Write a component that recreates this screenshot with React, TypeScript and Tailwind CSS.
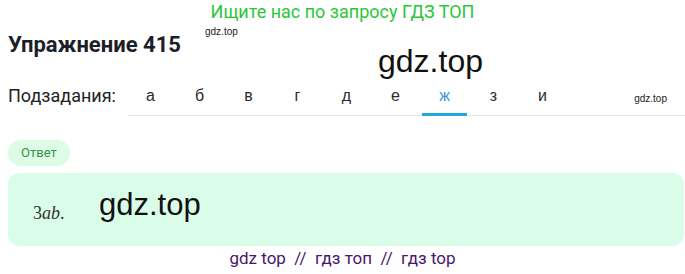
const tabs = ["а", "б", "в", "г", "д", "е", "ж", "з", "и"];
const active = "ж";

export default function App() {
  return (
    <div className="relative w-[685px] h-[274px] overflow-hidden bg-white font-['Roboto',sans-serif]">
      <p className="text-center text-[18px] leading-[24px] text-[#2bc63a]">
        Ищите нас по запросу ГДЗ ТОП
      </p>

      <h1 className="mt-[7px] ml-2 text-[22px] leading-[28px] font-bold text-[#1c1f29]">
        Упражнение 415
      </h1>

      {/* watermarks */}
      <span className="absolute left-[205px] top-[26px] text-[10px] leading-[12px] text-[#222] font-['Liberation_Sans',sans-serif]">
        gdz.top
      </span>
      <span className="absolute left-[378px] top-[42px] text-[32px] leading-[38px] text-[#111] font-['Liberation_Sans',sans-serif]">
        gdz.top
      </span>

      <div className="mt-[20px] flex items-end h-[37px]">
        <span className="w-[128px] shrink-0 pl-2 pb-[8px] text-[18px] leading-[24px] text-[#222]">
          Подзадания:
        </span>
        <div className="flex flex-1 items-end gap-[4px] border-b border-[#e6e8eb]">
          {tabs.map((t) => (
            <button
              key={t}
              className={
                t === active
                  ? "-mb-px w-[45px] pb-[7px] border-b-[3px] border-[#1ea7e1] text-[16px] leading-[20px] text-[#3b9bd9] font-['Liberation_Sans',sans-serif]"
                  : "-mb-px w-[45px] pb-[7px] border-b-[3px] border-transparent text-[16px] leading-[20px] text-[#2b2b2b] font-['Liberation_Sans',sans-serif]"
              }
            >
              {t}
            </button>
          ))}
          <span className="ml-auto mr-[18px] pb-[10px] text-[10px] leading-[12px] text-[#222] font-['Liberation_Sans',sans-serif]">
            gdz.top
          </span>
        </div>
      </div>

      <div className="mt-[24px] ml-2 inline-flex h-[26px] items-center rounded-full bg-[#dcfce6] px-[13px] text-[13px] text-[#3a8f4b]">
        Ответ
      </div>

      <div className="mt-[7px] ml-2 mr-px flex h-[73px] rounded-[12px] bg-[#d9fde8] pl-[25px] pt-[14px]">
        <span className="mt-[14px] w-[66px] text-[18px] leading-[24px] text-[#333] font-['Liberation_Serif',serif]">
          3<i>ab</i>.
        </span>
        <span className="text-[31px] leading-[36px] text-[#111] font-['Liberation_Sans',sans-serif]">
          gdz.top
        </span>
      </div>

      <p className="whitespace-pre text-center text-[17px] leading-[24px] text-[#4a1570]">
        gdz top  //  гдз топ  //  гдз top
      </p>
    </div>
  );
}
